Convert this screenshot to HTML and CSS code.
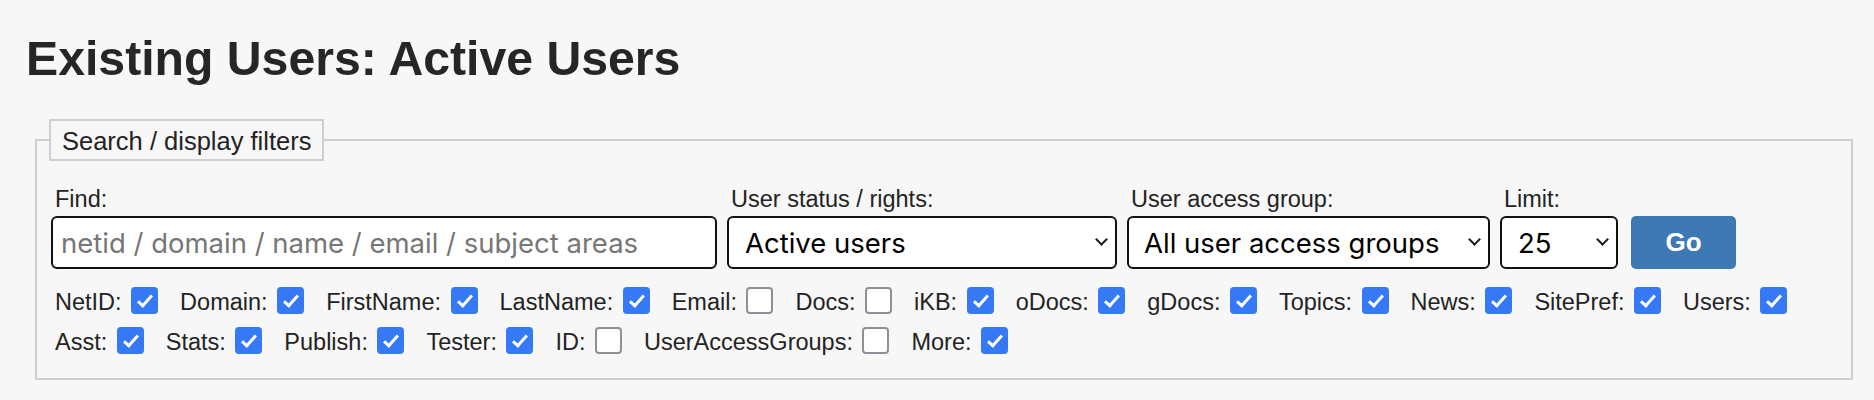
FILE: index.html
```html
<!DOCTYPE html>
<html lang="en">
<head>
<meta charset="utf-8">
<title>Existing Users: Active Users</title>
<link rel="stylesheet" href="styles.css">
</head>
<body>
<h1 class="page-title">Existing Users: Active Users</h1>
<form class="filters">
  <fieldset class="filter-box">
    <legend class="filter-legend">Search / display filters</legend>
    <div class="controls">
      <div class="field">
        <label class="field-label" for="find">Find:</label>
        <input class="ctl ctl-find" id="find" type="text" placeholder="netid / domain / name / email / subject areas">
      </div>
      <div class="field">
        <label class="field-label" for="status">User status / rights:</label>
        <span class="sel">
          <select class="ctl ctl-select ctl-status" id="status"><option>Active users</option></select>
        </span>
      </div>
      <div class="field">
        <label class="field-label" for="group">User access group:</label>
        <span class="sel">
          <select class="ctl ctl-select ctl-group" id="group"><option>All user access groups</option></select>
        </span>
      </div>
      <div class="field">
        <label class="field-label" for="limit">Limit:</label>
        <span class="sel">
          <select class="ctl ctl-select ctl-limit" id="limit"><option>25</option></select>
        </span>
      </div>
      <button class="go-btn" type="button">Go</button>
    </div>
    <div class="checks">
      <label class="chk"><span class="chk-text">NetID:</span><input type="checkbox" checked></label>
      <label class="chk"><span class="chk-text">Domain:</span><input type="checkbox" checked></label>
      <label class="chk"><span class="chk-text">FirstName:</span><input type="checkbox" checked></label>
      <label class="chk"><span class="chk-text">LastName:</span><input type="checkbox" checked></label>
      <label class="chk"><span class="chk-text">Email:</span><input type="checkbox"></label>
      <label class="chk"><span class="chk-text">Docs:</span><input type="checkbox"></label>
      <label class="chk"><span class="chk-text">iKB:</span><input type="checkbox" checked></label>
      <label class="chk"><span class="chk-text">oDocs:</span><input type="checkbox" checked></label>
      <label class="chk"><span class="chk-text">gDocs:</span><input type="checkbox" checked></label>
      <label class="chk"><span class="chk-text">Topics:</span><input type="checkbox" checked></label>
      <label class="chk"><span class="chk-text">News:</span><input type="checkbox" checked></label>
      <label class="chk"><span class="chk-text">SitePref:</span><input type="checkbox" checked></label>
      <label class="chk"><span class="chk-text">Users:</span><input type="checkbox" checked></label>
      <label class="chk"><span class="chk-text">Asst:</span><input type="checkbox" checked></label>
      <label class="chk"><span class="chk-text">Stats:</span><input type="checkbox" checked></label>
      <label class="chk"><span class="chk-text">Publish:</span><input type="checkbox" checked></label>
      <label class="chk"><span class="chk-text">Tester:</span><input type="checkbox" checked></label>
      <label class="chk"><span class="chk-text">ID:</span><input type="checkbox"></label>
      <label class="chk"><span class="chk-text">UserAccessGroups:</span><input type="checkbox"></label>
      <label class="chk"><span class="chk-text">More:</span><input type="checkbox" checked></label>
    </div>
  </fieldset>
</form>
</body>
</html>
```
FILE: styles.css
```css
html, body {
  margin: 0;
  background: #f7f7f7;
}
body {
  padding: 30px 21px 0 26px;
  font-family: "Liberation Sans", Arial, Helvetica, sans-serif;
  color: #232323;
}
.page-title {
  margin: 0;
  font-size: 48.2px;
  line-height: 56px;
  font-weight: bold;
  color: #262626;
}
.filters {
  margin: 33px 0 0 9px;
}
.filter-box {
  margin: 0;
  border: 2px solid #cfcfcf;
  padding: 25px 14px 24px 14px;
  min-width: 0;
}
.filter-legend {
  margin-left: -2px;
  border: 2px solid #cfcfcf;
  padding: 2px 11px 0 11px;
  font-size: 25.5px;
  line-height: 36px;
  color: #232323;
}
.controls {
  display: flex;
  align-items: flex-end;
  gap: 10px;
}
.field {
  display: flex;
  flex-direction: column;
}
.field-label {
  padding-left: 4px;
  margin-bottom: 3px;
  font-size: 23.5px;
  line-height: 27px;
  color: #232323;
}
.ctl {
  box-sizing: border-box;
  height: 53px;
  border: 2px solid #111;
  border-radius: 6px;
  background: #fff;
  font-family: Inter, "Noto Sans", sans-serif;
  font-size: 27.5px;
  color: #000;
  margin: 0;
  outline: none;
}
.ctl-find {
  width: 666px;
  padding: 0 8px;
}
.ctl-find::placeholder {
  color: #767676;
}
.sel {
  position: relative;
  display: block;
}
.sel::after {
  content: "";
  position: absolute;
  right: 11px;
  top: 50%;
  margin-top: -8px;
  width: 7px;
  height: 7px;
  border-right: 2px solid #1a1a1a;
  border-bottom: 2px solid #1a1a1a;
  transform: rotate(45deg);
  pointer-events: none;
}
.ctl-select {
  display: block;
  appearance: none;
  -webkit-appearance: none;
  padding: 0 30px 0 16px;
}
.ctl-status { width: 390px; }
.ctl-group { width: 363px; padding-left: 15px; }
.ctl-limit { width: 118px; }
.go-btn {
  box-sizing: border-box;
  width: 105px;
  height: 53px;
  margin-left: 3px;
  border: none;
  border-radius: 5px;
  background: #3e79b3;
  color: #fff;
  font-family: "Liberation Sans", Arial, sans-serif;
  font-weight: bold;
  font-size: 26px;
  padding: 0;
}
.checks {
  margin-top: 18px;
  padding-left: 4px;
  display: flex;
  flex-wrap: wrap;
  column-gap: 22px;
  row-gap: 13px;
}
.chk {
  display: inline-flex;
  align-items: center;
  height: 27px;
  font-size: 23.5px;
  line-height: 27px;
  color: #232323;
}
.chk-text {
  padding-top: 4px;
}
.chk input {
  appearance: none;
  -webkit-appearance: none;
  position: relative;
  box-sizing: border-box;
  width: 27px;
  height: 27px;
  margin: 0 0 0 9.5px;
  border: 2.5px solid #8f8f98;
  border-radius: 4px;
  background: #fff;
}
.chk input:checked {
  border: none;
  background: #3579f6;
}
.chk input:checked::after {
  content: "";
  position: absolute;
  left: 10px;
  top: 5px;
  width: 5px;
  height: 12px;
  border-right: 3px solid #fff;
  border-bottom: 3px solid #fff;
  transform: rotate(42deg);
}
```
